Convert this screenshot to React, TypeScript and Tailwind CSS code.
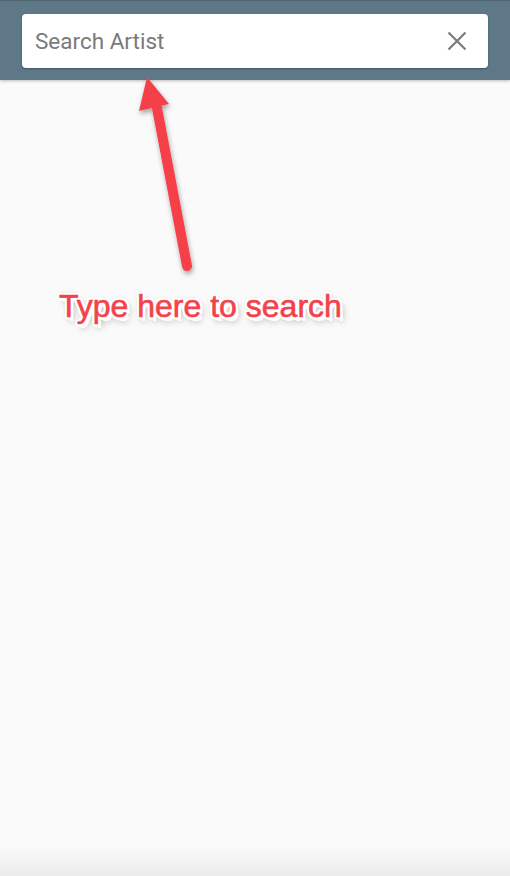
import React from "react";

export default function App() {
  return (
    <div className="relative w-[510px] h-[876px] overflow-hidden bg-[#fafafa]" style={{ fontFamily: "Roboto, 'Liberation Sans', sans-serif" }}>
      <div className="h-[80px] bg-[#5e7888] border-t border-[#4d6472] pt-[13px] px-[22px] shadow-[0_1px_3px_rgba(0,0,0,0.25)]">
        <div className="h-[54px] bg-white rounded-[4px] shadow-[0_1px_2px_rgba(0,0,0,0.3)] flex items-center pl-[13px] pr-[21px]">
          <span className="flex-1 text-[22.5px] text-[#7a7a7a] leading-none">Search Artist</span>
          <svg width="20" height="20" viewBox="0 0 20 20" className="block">
            <path d="M1.5 1.5 L18.5 18.5 M18.5 1.5 L1.5 18.5" stroke="#7a7a7a" strokeWidth="2.2" strokeLinecap="butt" />
          </svg>
        </div>
      </div>
      <div className="absolute inset-x-0 bottom-0 h-[30px] bg-gradient-to-b from-transparent to-[#ececec]" />
      <svg className="absolute left-0 top-0" width="510" height="300" viewBox="0 0 510 300">
        <defs>
          <filter id="sh" x="-50%" y="-50%" width="200%" height="200%">
            <feDropShadow dx="1" dy="3" stdDeviation="2.5" floodColor="#000" floodOpacity="0.35" />
          </filter>
        </defs>
        <g filter="url(#sh)">
          <line x1="157" y1="108" x2="187" y2="266" stroke="#f5414a" strokeWidth="10" strokeLinecap="round" />
          <polygon points="147,77 139,111 169,104" fill="#f5414a" />
        </g>
      </svg>
      <div
        className="absolute left-[59px] top-[290px] text-[32px] text-[#f5414a] leading-none"
        style={{
          fontFamily: "'Liberation Sans', Arial, sans-serif",
          WebkitTextStroke: "0.6px #f5414a",
          textShadow:
            "2.5px 0 0 #fff, -2.5px 0 0 #fff, 0 2.5px 0 #fff, 0 -2.5px 0 #fff, 2px 2px 0 #fff, -2px 2px 0 #fff, 2px -2px 0 #fff, -2px -2px 0 #fff, 3px 3.5px 0 #fff, 3px 5px 6px rgba(0,0,0,0.35), 0 0 5px rgba(0,0,0,0.25)",
        }}
      >
        Type here to search
      </div>
    </div>
  );
}
